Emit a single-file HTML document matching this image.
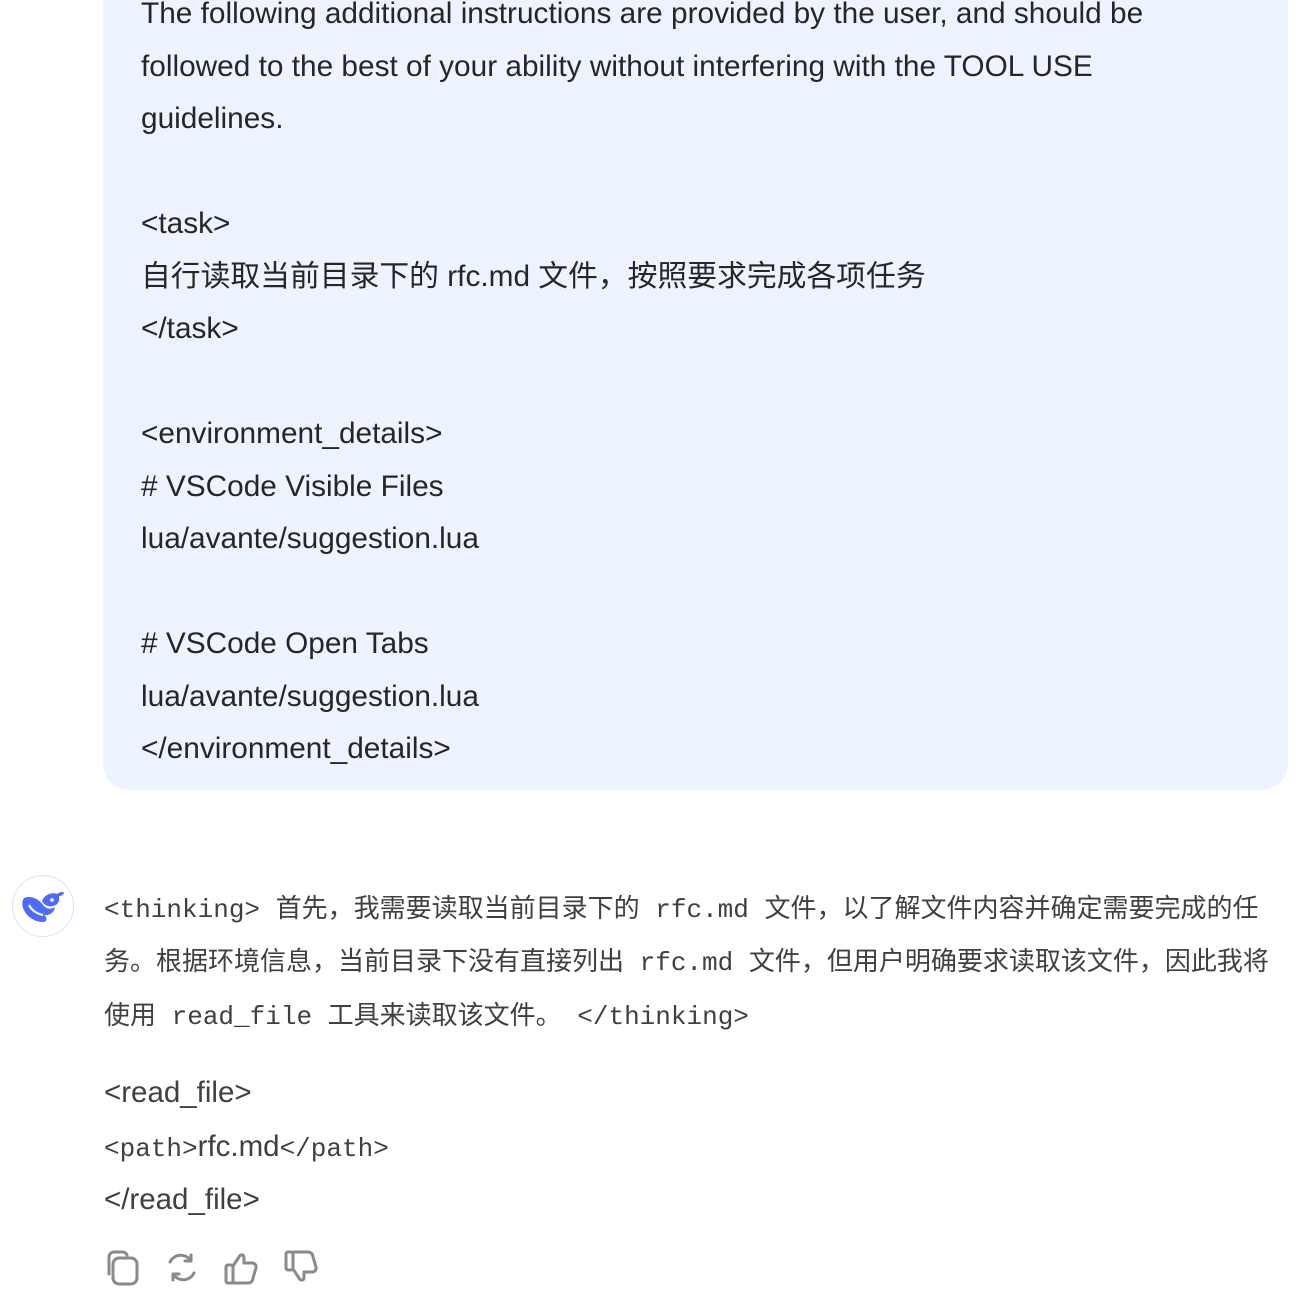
<!DOCTYPE html>
<html><head><meta charset="utf-8"><style>
body{margin:0;width:1303px;height:1310px;background:#fff;overflow:hidden;position:relative;font-family:"Liberation Sans","Noto Sans CJK SC",sans-serif}
.bub{position:absolute;left:103px;top:-40px;width:1185px;height:830px;background:#eef4ff;border-radius:26px}
.l{position:absolute;left:141px;white-space:nowrap;font-size:29.8px;color:#262626;line-height:52px;height:52px}
.r{position:absolute;left:104px;white-space:nowrap;font-size:26px;color:#404040;line-height:52px;height:52px;font-family:"Liberation Mono","Noto Sans CJK SC",monospace}
.r .c{font-family:"Liberation Sans","Noto Sans CJK SC",sans-serif}
.r .s{font-family:"Liberation Sans","Noto Sans CJK SC",sans-serif;font-size:29.5px}
.av{position:absolute;left:12px;top:875px;width:60px;height:60px;border-radius:50%;border:1.5px solid #d6e2ff;background:#fff}
</style></head><body>
<div class="bub"></div>
<div class="l" style="top:-12px">The following additional instructions are provided by the user, and should be</div>
<div class="l" style="top:41px">followed to the best of your ability without interfering with the TOOL USE</div>
<div class="l" style="top:93px">guidelines.</div>
<div class="l" style="top:198px">&lt;task&gt;</div>
<div class="l" style="top:251px">自行读取当前目录下的 rfc.md 文件，按照要求完成各项任务</div>
<div class="l" style="top:303px">&lt;/task&gt;</div>
<div class="l" style="top:408px">&lt;environment_details&gt;</div>
<div class="l" style="top:461px"># VSCode Visible Files</div>
<div class="l" style="top:513px">lua/avante/suggestion.lua</div>
<div class="l" style="top:618px"># VSCode Open Tabs</div>
<div class="l" style="top:671px">lua/avante/suggestion.lua</div>
<div class="l" style="top:723px">&lt;/environment_details&gt;</div>

<div class="av"><svg width="60" height="60" viewBox="0 0 60 60"><path d="M11 22c7-3 15 1 19 7 3 4 8 5 12 2-1 6-6 9-11 8 4 3 3 7-1 7-9 0-17-6-20-14-1-4-1-7 1-10z" fill="#4d6bfe"/><path d="M29 25c3-7 10-9 15-7 3-2 6-3 7-1-1 2-3 3-5 3 1 5-1 9-6 10-5 1-9-1-11-5z" fill="#4d6bfe"/><circle cx="39" cy="24" r="1.8" fill="#fff"/><path d="M16 29c3 6 9 9 14 10" stroke="#fff" stroke-width="2.2" fill="none"/></svg></div>

<div class="r" style="top:882px">&lt;thinking&gt; <span class="c">首先，我需要读取当前目录下的</span> rfc.md <span class="c">文件，以了解文件内容并确定需要完成的任</span></div>
<div class="r" style="top:935px"><span class="c">务。根据环境信息，当前目录下没有直接列出</span> rfc.md <span class="c">文件，但用户明确要求读取该文件，因此我将</span></div>
<div class="r" style="top:989px"><span class="c">使用</span> read_file <span class="c">工具来读取该文件。</span> &lt;/thinking&gt;</div>
<div class="r" style="top:1067px"><span class="s">&lt;read_file&gt;</span></div>
<div class="r" style="top:1121px">&lt;path&gt;<span class="s">rfc.md</span>&lt;/path&gt;</div>
<div class="r" style="top:1174px"><span class="s">&lt;/read_file&gt;</span></div>

<svg style="position:absolute;left:100px;top:1245px" width="230" height="45" viewBox="0 0 230 45" fill="none" stroke="#8a8a8a" stroke-width="3" stroke-linecap="round" stroke-linejoin="round">
<path d="M9 29V12a5 5 0 0 1 5-5h9a5 5 0 0 1 4 3"/>
<rect x="13" y="13" width="24" height="26" rx="6"/>
<path d="M70 17a12 12 0 0 1 21-1M91 10v6h-6M94 28a12 12 0 0 1-21 1M73 35v-6h6"/>
<rect x="126" y="20" width="7" height="18" rx="2"/>
<path d="M133 21l6-9c1-3 5-3 5 1v5h8a4 4 0 0 1 4 5l-3 10a5 5 0 0 1-5 5h-15"/>
<rect x="186" y="7" width="7" height="18" rx="2"/>
<path d="M193 24l6 9c1 3 5 3 5-1v-5h8a4 4 0 0 0 4-5l-3-10a5 5 0 0 0-5-5h-15"/>
</svg>
</body></html>
